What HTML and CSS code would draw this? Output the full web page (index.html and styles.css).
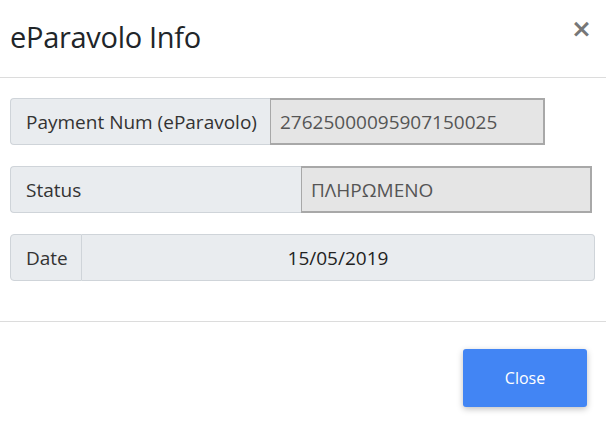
FILE: index.html
```html
<!DOCTYPE html>
<html lang="en">
<head>
  <meta charset="UTF-8" />
  <meta name="viewport" content="width=device-width, initial-scale=1.0"/>
  <title>eParavolo Info</title>
  <link rel="stylesheet" href="styles.css">
</head>
<body>

  <div class="modal">
    <div class="modal-header">
      <h2 class="modal-title">eParavolo Info</h2>
      <button class="close-x" type="button">&times;</button>
    </div>

    <div class="modal-body">
      <div class="input-group group-payment">
        <span class="group-label">Payment Num (eParavolo)</span>
        <input class="group-input" type="text" value="27625000095907150025" disabled />
      </div>

      <div class="input-group group-status">
        <span class="group-label">Status</span>
        <input class="group-input" type="text" value="ΠΛΗΡΩΜΕΝΟ" disabled />
      </div>

      <div class="input-group group-date">
        <span class="group-label">Date</span>
        <span class="group-value">15/05/2019</span>
      </div>
    </div>

    <div class="modal-footer">
      <button class="btn-close" type="button">Close</button>
    </div>
  </div>

</body>
</html>
```

FILE: styles.css
```css
body {
  margin: 0;
  background-color: #fff;
  font-family: "Open Sans", "Noto Sans", sans-serif;
  color: #212529;
}

.modal {
  width: 606px;
  height: 427px;
  display: flex;
  flex-direction: column;
}

.modal-header {
  height: 77px;
  border-bottom: 1px solid #dcdcdc;
  display: flex;
  justify-content: space-between;
  align-items: flex-start;
  padding: 0 10px;
  box-sizing: content-box;
}

.modal-title {
  margin: 17px 0 0;
  font-size: 29px;
  font-weight: 400;
  line-height: 40px;
  letter-spacing: -0.3px;
}

.close-x {
  margin: 14px 4px 0 0;
  padding: 0;
  border: none;
  background: none;
  font-family: "DejaVu Sans", sans-serif;
  font-size: 25px;
  font-weight: bold;
  line-height: 30px;
  color: #777;
  cursor: pointer;
}

.modal-body {
  padding: 20px 10px 0;
  height: 223px;
  border-bottom: 1px solid #dcdcdc;
  box-sizing: content-box;
}

.input-group {
  display: flex;
  height: 47px;
  margin-bottom: 21px;
  font-size: 19px;
}

.group-label {
  display: flex;
  align-items: center;
  box-sizing: border-box;
  padding: 0 15px;
  background-color: #e9ecef;
  border: 1px solid #cfd4d9;
  border-right: none;
  border-radius: 4px 0 0 4px;
  color: #333;
  white-space: nowrap;
}

.group-input {
  box-sizing: border-box;
  height: 47px;
  margin: 0;
  padding: 0 9px;
  background-color: #e5e5e5;
  border: 2px solid #a8a8a8;
  border-left-width: 1px;
  font-family: inherit;
  font-size: 19px;
  color: #555;
  -webkit-text-fill-color: #555;
  opacity: 1;
}

.group-payment .group-label { width: 260px; }
.group-payment .group-input { width: 275px; }

.group-status .group-label { width: 291px; }
.group-status .group-input { width: 291px; }

.group-date .group-label {
  width: 72px;
  border-right: 1px solid #cfd4d9;
}

.group-value {
  width: 512px;
  display: flex;
  align-items: center;
  justify-content: center;
  background-color: #e9ecef;
  border: 1px solid #cfd4d9;
  border-left: none;
  border-radius: 0 4px 4px 0;
  color: #222;
}

.modal-footer {
  flex: 1;
  display: flex;
  justify-content: flex-end;
  align-items: flex-start;
  padding: 27px 19px 0;
}

.btn-close {
  width: 124px;
  height: 58px;
  background-color: #4285f4;
  color: #fff;
  border: none;
  border-radius: 3px;
  box-shadow: 0 2px 6px rgba(0, 0, 0, 0.25);
  font-family: inherit;
  font-size: 16px;
  cursor: pointer;
}
```
